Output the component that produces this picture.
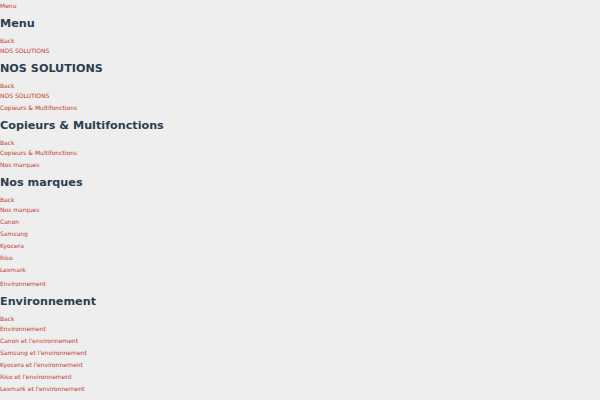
import React from 'react'

const linkCls = "block h-[10px] leading-[10px] text-[6px] text-[#c0392b] whitespace-nowrap"

const menu = {
  title: "Menu",
  root: true,
  items: [
    {
      title: "NOS SOLUTIONS",
      items: [
        {
          title: "Copieurs & Multifonctions",
          items: [
            {
              title: "Nos marques",
              items: [{ title: "Canon" }, { title: "Samsung" }, { title: "Kyocera" }, { title: "Riso" }, { title: "Lexmark" }],
            },
            {
              title: "Environnement",
              items: [
                { title: "Canon et l'environnement" },
                { title: "Samsung et l'environnement" },
                { title: "Kyocera et l'environnement" },
                { title: "Riso et l'environnement" },
                { title: "Lexmark et l'environnement" },
              ],
            },
          ],
        },
      ],
    },
  ],
}

function Submenu({ node }) {
  return (
    <div>
      <h2 className="mt-[6px] h-[14px] leading-[14px] text-[11.2px] font-bold text-[#2c3e50] whitespace-nowrap">{node.title}</h2>
      <ul className="mt-[5px]">
        <li><a href="#" className={linkCls}>Back</a></li>
        {!node.root && <li><a href="#" className={linkCls}>{node.title}</a></li>}
        {node.items.map((item, i) => {
          let mt = "mt-[2px]"
          if (node.root && i === 0) mt = ""
          else if (i > 0 && node.items[i - 1].items) mt = "mt-[4px]"
          return (
            <li key={item.title} className={mt}>
              <a href="#" className={linkCls}>{item.title}</a>
              {item.items && <Submenu node={item} />}
            </li>
          )
        })}
      </ul>
    </div>
  )
}

export default function App() {
  return (
    <div className="h-[400px] overflow-hidden bg-[#eeeeee] pt-px" style={{ fontFamily: '"DejaVu Sans", Verdana, sans-serif' }}>
      <a href="#" className={linkCls}>Menu</a>
      <Submenu node={menu} />
    </div>
  )
}
